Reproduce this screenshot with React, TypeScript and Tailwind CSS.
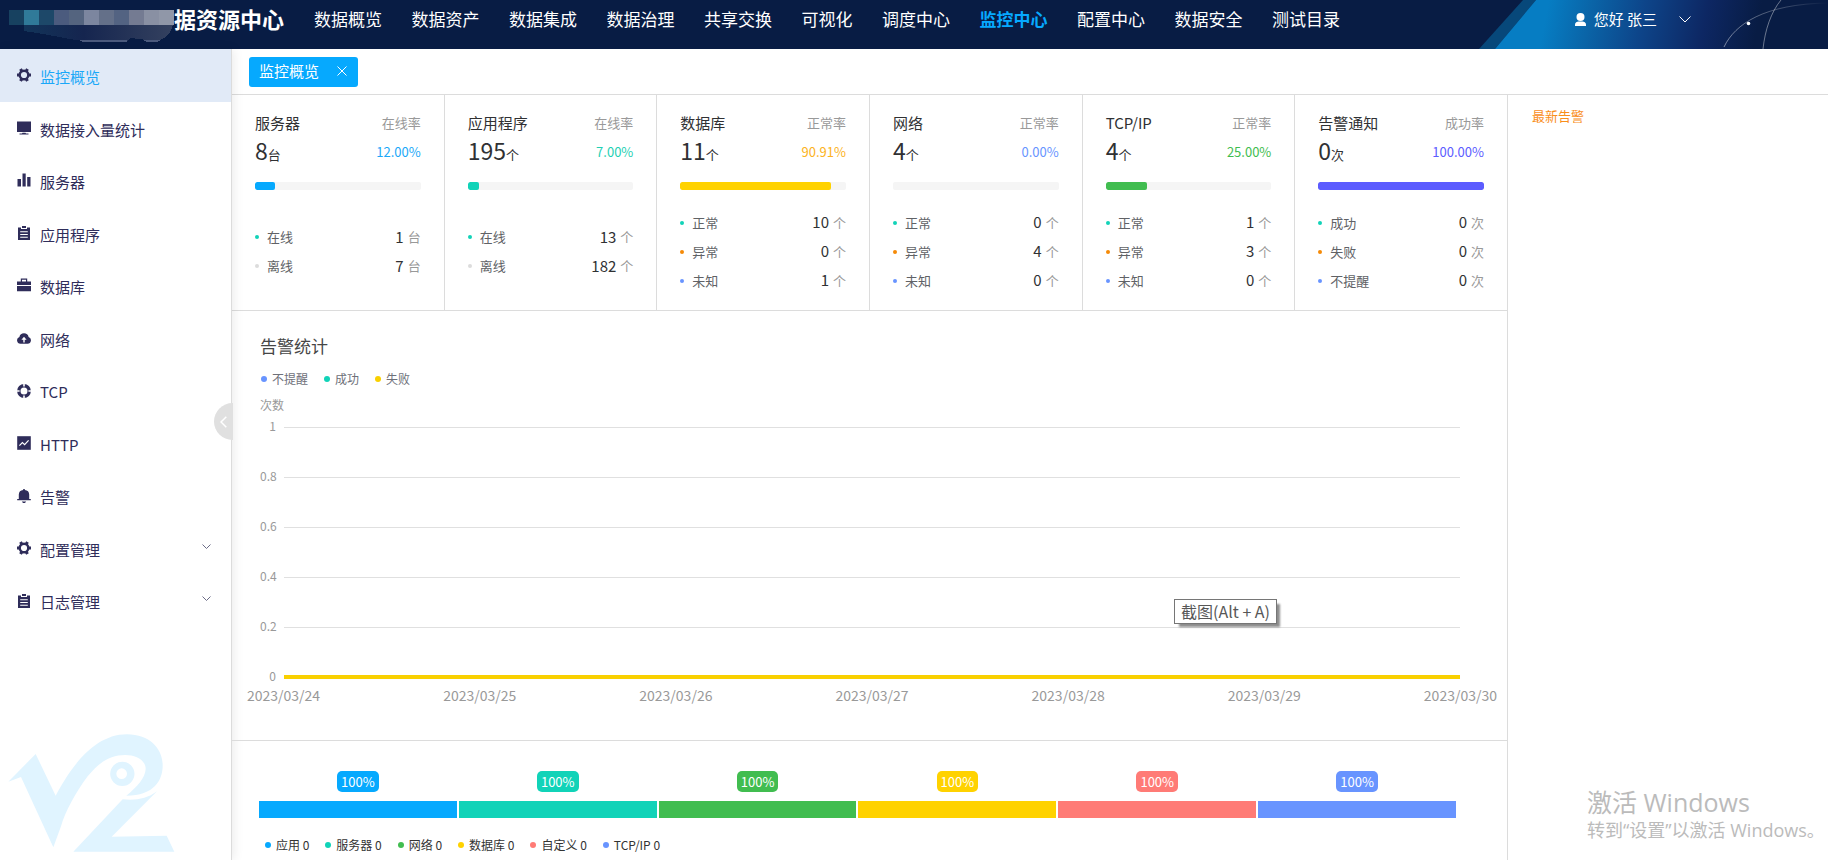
import type { ReactNode } from "react";

const topNav = [
  "数据概览",
  "数据资产",
  "数据集成",
  "数据治理",
  "共享交换",
  "可视化",
  "调度中心",
  "监控中心",
  "配置中心",
  "数据安全",
  "测试目录",
];

function Glyph({ children }: { children: ReactNode }) {
  return (
    <svg viewBox="0 0 14 14" className="size-[14px] shrink-0 -translate-y-0.5" fill="currentColor" aria-hidden="true">
      {children}
    </svg>
  );
}

const gear = (
  <Glyph>
    <circle cx="7" cy="7" r="4.300" fill="none" stroke="currentColor" strokeWidth="2.400" />
    <path d="M0 5.500 H2.800 V8.500 H0 Z M11.200 5.500 H14 V8.500 H11.200 Z" />
    <path d="M0 5.500 H2.800 V8.500 H0 Z M11.200 5.500 H14 V8.500 H11.200 Z" transform="rotate(60 7 7)" />
    <path d="M0 5.500 H2.800 V8.500 H0 Z M11.200 5.500 H14 V8.500 H11.200 Z" transform="rotate(120 7 7)" />
  </Glyph>
);

const clipboard = (
  <Glyph>
    <path fillRule="evenodd" d="M1 1.4 H4 V3 H10 V1.4 H13 V14 H1 Z M3.2 5.2 V6.2 H10.8 V5.2 Z M3.2 8 V9 H10.8 V8 Z M3.2 10.8 V11.8 H10.8 V10.8 Z" />
    <path d="M5 0 H9 V2 H5 Z" />
  </Glyph>
);

const sideNav = [
  { label: "监控概览", icon: gear, active: true },
  {
    label: "数据接入量统计",
    icon: (
      <Glyph>
        <path d="M0 0.5 H14 V11 H0 Z M5.5 11.8 H8.5 L9 12.6 H11.5 V13.5 H2.5 V12.6 H5 Z" />
      </Glyph>
    ),
  },
  {
    label: "服务器",
    icon: (
      <Glyph>
        <path d="M0.5 6 H4 V13.5 H0.5 Z M5.5 0.5 H8.7 V13.5 H5.5 Z M10.2 4 H13.5 V13.5 H10.2 Z" />
      </Glyph>
    ),
  },
  { label: "应用程序", icon: clipboard },
  {
    label: "数据库",
    icon: (
      <Glyph>
        <path d="M0 3.5 H3.8 V0.5 H10.2 V3.5 H14 V7 H0 Z M5 1.7 V3.5 H9 V1.7 Z M0 8 H14 V13.2 H0 Z" fillRule="evenodd" />
      </Glyph>
    ),
  },
  {
    label: "网络",
    icon: (
      <Glyph>
        <path
          fillRule="evenodd"
          d="M3.4 12.8 A3.5 3.5 0 0 1 2.4 6 A4.7 4.7 0 0 1 11.6 6 A3.5 3.5 0 0 1 10.6 12.8 Z M7 5.8 L4.4 8.8 H6.3 V11.6 H7.7 V8.8 H9.6 Z"
        />
      </Glyph>
    ),
  },
  {
    label: "TCP",
    icon: (
      <Glyph>
        <circle cx="7" cy="7" r="5.200" fill="none" stroke="currentColor" strokeWidth="3.400" />
        <path d="M6.2 0 H7.8 V2.6 H6.2 Z M6.2 11.4 H7.8 V14 H6.2 Z M0 6.2 H2.6 V7.8 H0 Z M11.4 6.2 H14 V7.8 H11.4 Z" fill="#fff" />
      </Glyph>
    ),
  },
  {
    label: "HTTP",
    icon: (
      <Glyph>
        <path d="M0.2 0.2 H13.8 V13.8 H0.2 Z" />
        <path d="M2.4 9.6 L5.4 6.6 L7.6 8.6 L11.6 4.4" fill="none" stroke="#fff" strokeWidth="1.2" />
      </Glyph>
    ),
  },
  {
    label: "告警",
    icon: (
      <Glyph>
        <path d="M6.2 0 H7.8 V1 A4.8 4.8 0 0 1 12.2 5.6 V10 H13.8 V11.2 H0.2 V10 H1.8 V5.6 A4.8 4.8 0 0 1 6.2 1 Z M4.8 12.4 H9.2 L8 14 H6 Z" />
      </Glyph>
    ),
  },
  { label: "配置管理", icon: gear, expandable: true },
  { label: "日志管理", icon: clipboard, expandable: true },
];

const teal = "bg-[#11d3b8]";
const orange = "bg-[#f58a07]";
const blue = "bg-[#6894ff]";
const gray = "bg-[#dcdcdc]";

const cards = [
  {
    title: "服务器", total: "8", unit: "台", rateName: "在线率", rate: "12.00%", percent: 12,
    text: "text-[#1ba8f8]", bar: "bg-[#06a9fe]",
    rows: [["在线", "1", teal], ["离线", "7", gray]],
  },
  {
    title: "应用程序", total: "195", unit: "个", rateName: "在线率", rate: "7.00%", percent: 7,
    text: "text-[#1fd0b4]", bar: "bg-[#11d3b8]",
    rows: [["在线", "13", teal], ["离线", "182", gray]],
  },
  {
    title: "数据库", total: "11", unit: "个", rateName: "正常率", rate: "90.91%", percent: 90.91,
    text: "text-[#fcb322]", bar: "bg-[#ffd200]",
    rows: [["正常", "10", teal], ["异常", "0", orange], ["未知", "1", blue]],
  },
  {
    title: "网络", total: "4", unit: "个", rateName: "正常率", rate: "0.00%", percent: 0,
    text: "text-[#6894ff]", bar: "bg-[#6894ff]",
    rows: [["正常", "0", teal], ["异常", "4", orange], ["未知", "0", blue]],
  },
  {
    title: "TCP/IP", total: "4", unit: "个", rateName: "正常率", rate: "25.00%", percent: 25,
    text: "text-[#41bd50]", bar: "bg-[#41bd50]",
    rows: [["正常", "1", teal], ["异常", "3", orange], ["未知", "0", blue]],
  },
  {
    title: "告警通知", total: "0", unit: "次", rateName: "成功率", rate: "100.00%", percent: 100,
    text: "text-[#5c5cff]", bar: "bg-[#5c5cff]",
    rows: [["成功", "0", teal], ["失败", "0", orange], ["不提醒", "0", blue]],
  },
];

const alarmLegend = [
  ["不提醒", blue],
  ["成功", teal],
  ["失败", "bg-[#f9d000]"],
];

const ticks = ["1", "0.8", "0.6", "0.4", "0.2", "0"];

const days = ["2023/03/24", "2023/03/25", "2023/03/26", "2023/03/27", "2023/03/28", "2023/03/29", "2023/03/30"];

const segments = [
  ["应用 0", "bg-[#06a9fe]"],
  ["服务器 0", "bg-[#11d3b8]"],
  ["网络 0", "bg-[#41bd50]"],
  ["数据库 0", "bg-[#ffd200]"],
  ["自定义 0", "bg-[#ff7b76]"],
  ["TCP/IP 0", "bg-[#6894ff]"],
];

function HeaderArt() {
  return (
    <svg viewBox="0 0 349 49" className="absolute right-0 top-0 h-full w-[349px]" aria-hidden="true">
      <defs>
        <linearGradient id="beam" gradientUnits="userSpaceOnUse" x1="70" y1="0" x2="276" y2="40">
          <stop offset="0" stopColor="#067dc3" />
          <stop offset="0.2" stopColor="#0a65a8" />
          <stop offset="0.45" stopColor="#0d458a" />
          <stop offset="0.75" stopColor="#0d2763" />
          <stop offset="1" stopColor="#081c44" />
        </linearGradient>
        <linearGradient id="fade" x1="0" x2="1">
          <stop offset="0" stopColor="#fff" stopOpacity="0.45" />
          <stop offset="0.6" stopColor="#fff" stopOpacity="0.2" />
          <stop offset="1" stopColor="#fff" stopOpacity="0" />
        </linearGradient>
      </defs>
      <path d="M44 0 H57 L16 49 H0 Z" fill="#07487a" />
      <path d="M57 0 H349 V49 H16 Z" fill="url(#beam)" />
      <path d="M245 47 C256 24 285 4 349 3" fill="none" stroke="url(#fade)" />
      <path d="M284 49 C286 30 292 12 302 0" fill="none" stroke="#fff" strokeOpacity="0.4" />
      <circle cx="269.500" cy="23.500" r="1.800" fill="#fff" />
    </svg>
  );
}

function BrandArt() {
  const cells = ["#174160", "#307a99", "#1d4869", "#4b5b7e", "#54647f", "#7c869f", "#647089", "#536382", "#747b92", "#8990a3", "#9097a8"];
  return (
    <svg viewBox="0 0 170 42" className="h-[42px] w-[170px]" shapeRendering="crispEdges" aria-hidden="true">
      <defs>
        <linearGradient id="brand" x1="0" x2="1">
          <stop offset="0" stopColor="#123459" />
          <stop offset="0.4" stopColor="#15254f" />
          <stop offset="1" stopColor="#34415f" />
        </linearGradient>
      </defs>
      <path d="M15 25 H164 C162 34 156 40 146 41 L122 38 L118 41 H74 C58 39 38 34 15 31 Z" fill="url(#brand)" />
      <path d="M70 40 H118 V42 H74 Z M134 40 H152 L148 42 H138 Z" fill="#4c5b7e" />
      {cells.map((fill, i) => (
        <rect key={fill} x={i * 15} y="10" width="15" height="15" fill={fill} />
      ))}
    </svg>
  );
}

function Header() {
  return (
    <header className="relative flex h-[49px] items-start bg-[#081c44] text-white">
      <HeaderArt />
      <div className="flex w-[314px] shrink-0 pl-[9px]">
        <BrandArt />
        <h1 className="-ml-[5px] whitespace-nowrap text-[22px] leading-9 font-bold">据资源中心</h1>
      </div>
      <nav className="flex w-[1026px] justify-between text-[17px] leading-[38px]">
        {topNav.map((item) => (
          <a key={item} href="#" className={item === "监控中心" ? "whitespace-nowrap font-bold text-[#06a9ff]" : "whitespace-nowrap"}>
            {item}
          </a>
        ))}
      </nav>
      <button className="relative mr-[137px] ml-auto flex h-[38px] items-center whitespace-nowrap text-[15px]">
        <svg viewBox="0 0 11 13" className="mr-2 h-[13px] w-[11px]" fill="#fff" aria-hidden="true">
          <circle cx="5.500" cy="4" r="4" />
          <path d="M0 13 V11.500 C0 9.500 2 8.800 3.500 8.500 H7.500 C9 8.800 11 9.500 11 11.500 V13 Z" />
        </svg>
        您好 张三
        <svg viewBox="0 0 12 7" className="ml-[22px] h-[7px] w-3" fill="none" stroke="#fff" aria-hidden="true">
          <path d="M0.500 0.500 L6 6 L11.500 0.500" />
        </svg>
      </button>
    </header>
  );
}

function Sidebar() {
  return (
    <aside className="relative flex w-[232px] shrink-0 flex-col border-r border-[#dcdcdc] shadow-[2px_0_10px_rgba(0,0,0,0.08)]">
      <nav className="flex h-[578px] flex-col text-[15px] text-[#2f2d5a]">
        {sideNav.map((item) => (
          <a
            key={item.label}
            href="#"
            className={item.active ? "flex flex-1 items-center bg-[#e1eaf7] pt-1 pl-[17px]" : "flex flex-1 items-center pt-1 pl-[17px]"}
          >
            {item.icon}
            <span className={item.active ? "ml-[9px] text-[#1ba8f8]" : "ml-[9px]"}>{item.label}</span>
            {item.expandable && (
              <svg viewBox="0 0 9 5" className="mr-5 ml-auto h-[5px] w-[9px] -translate-y-1" fill="none" stroke="#6b6b86" aria-hidden="true">
                <path d="M0.500 0.500 L4.500 4.500 L8.500 0.500" />
              </svg>
            )}
          </a>
        ))}
      </nav>
      <svg viewBox="20 100 504 360" className="mt-auto mb-[7px] ml-[7px] h-[120px] w-[168px]" fill="#e0f4ff" aria-hidden="true">
        <path d="M24 246 L106 163 L166 288 C205 215 275 104 380 104 C450 104 488 150 487 198 C487 240 462 288 378 288 C410 262 435 235 436 208 C436 180 405 166 375 166 C330 166 300 185 262 230 C225 280 195 335 182 380 L159 443 L62 232 Z" />
        <path fillRule="evenodd" d="M366 186 A36.500 36.500 0 1 0 366 259 A36.500 36.500 0 1 0 366 186 Z M364 206 A16 16 0 1 1 364 238 A16 16 0 1 1 364 206 Z" />
        <path d="M367 299 C405 303 440 298 470 275 L334 411 L499 408 L522 456 H219 Z" />
      </svg>
      <button
        aria-label="收起菜单"
        className="absolute top-[354px] -right-0.5 flex h-[37px] w-[19px] items-center justify-center rounded-l-full bg-[#e0e0e0]"
      >
        <svg viewBox="0 0 7 12" className="h-3 w-[7px]" fill="none" stroke="#fff" strokeWidth="1.500" aria-hidden="true">
          <path d="M6.300 0.700 L1 6 L6.300 11.300" />
        </svg>
      </button>
    </aside>
  );
}

function StatCard({ card }: { card: (typeof cards)[number] }) {
  return (
    <section className="border-r border-[#dcdcdc] px-[23px] pt-4 pb-[15px] text-[#303133]">
      <div className="flex h-6 items-center justify-between">
        <h2 className="text-[15px]">{card.title}</h2>
        <span className="text-[13px] text-[#999]">{card.rateName}</span>
      </div>
      <div className="flex h-[34px] items-center justify-between">
        <p className="text-[13px] leading-[34px]">
          <span className="text-[23px]">{card.total}</span>
          {card.unit}
        </p>
        <span className={`text-[13px] ${card.text}`}>{card.rate}</span>
      </div>
      <div className="mt-[13px] h-2 overflow-hidden rounded-[2px] bg-[#f5f5f5]">
        <div className={`h-full rounded-[2px] ${card.bar}`} style={{ width: `${card.percent}%` }} />
      </div>
      <ul className="mt-[18px] flex h-[87px] flex-col justify-center">
        {card.rows.map(([label, value, dot]) => (
          <li key={label} className="flex h-[29px] items-center text-[13px]">
            <span className={`size-1 rounded-full ${dot}`} />
            <span className="ml-2 text-[#606266]">{label}</span>
            <span className="ml-auto text-[15px]">{value}</span>
            <span className="ml-1 text-[#999]">{card.unit}</span>
          </li>
        ))}
      </ul>
    </section>
  );
}

function Legend({ items }: { items: string[][] }) {
  return (
    <ul className="flex gap-4 text-[12px] leading-4">
      {items.map(([label, dot]) => (
        <li key={label} className="flex items-center gap-[5px]">
          <span className={`size-1.5 rounded-full ${dot}`} />
          {label}
        </li>
      ))}
    </ul>
  );
}

function AlarmChart() {
  return (
    <section className="relative border-b border-[#dcdcdc] pt-[23px] pb-[35px] text-[#999]">
      <h2 className="pl-7 text-[17px] leading-6 text-[#464646]">告警统计</h2>
      <div className="mt-[13px] pl-[29px] text-[#6e7079]">
        <Legend items={alarmLegend} />
      </div>
      <p className="mt-[10px] pl-7 text-[12px] leading-4">次数</p>
      <div className="mt-2 mr-[47px] ml-7 flex h-[262px] flex-col justify-between">
        {ticks.map((tick) => (
          <div key={tick} className="flex h-3 items-center gap-2">
            <span className="w-4 pb-0.5 text-right text-[12px] leading-3">{tick}</span>
            <span className={tick === "0" ? "h-1 flex-1 bg-[#f9d000]" : "h-px flex-1 bg-[#e0e0e0]"} />
          </div>
        ))}
      </div>
      <div className="mt-0.5 mr-[10px] ml-[15px] flex justify-between text-[14px] leading-5">
        {days.map((day) => (
          <span key={day}>{day}</span>
        ))}
      </div>
      <div
        role="tooltip"
        className="absolute right-[230px] bottom-[116px] border border-[#767676] bg-white px-1.5 text-[16px] leading-[23px] text-[#575757] shadow-[4px_4px_2px_-1px_rgba(0,0,0,0.45)]"
      >
        截图(Alt + A)
      </div>
    </section>
  );
}

function ShareBar() {
  return (
    <section className="pt-[30px] pr-[51px] pl-[27px]">
      <div className="grid grid-cols-6 gap-0.5">
        {segments.map(([label, color]) => (
          <div key={label} className="flex flex-col items-center">
            <span className={`rounded-[5px] px-1 text-[13px] leading-[21px] text-white ${color}`}>100%</span>
            <span className={`mt-[9px] h-[17px] w-full ${color}`} />
          </div>
        ))}
      </div>
      <div className="mt-[19px] pl-1.5 text-[#333]">
        <Legend items={segments} />
      </div>
    </section>
  );
}

export default function App() {
  return (
    <div className="flex min-h-screen flex-col bg-white font-['Noto_Sans_CJK_SC',sans-serif]">
      <Header />
      <div className="flex flex-1">
        <Sidebar />
        <main className="flex min-w-0 flex-1 flex-col">
          <div className="h-[46px] border-b border-[#dcdcdc] pt-2 pl-[17px]">
            <div className="flex h-[30px] w-[109px] items-center justify-between rounded-[3px] bg-[#06a9fe] pr-[11px] pb-0.5 pl-[10px] text-[15px] leading-7 text-white">
              <span>监控概览</span>
              <button aria-label="关闭">
                <svg viewBox="0 0 10 10" className="size-[10px]" stroke="#fff" aria-hidden="true">
                  <path d="M0.500 0.500 L9.500 9.500 M9.500 0.500 L0.500 9.500" />
                </svg>
              </button>
            </div>
          </div>
          <div className="flex flex-1">
            <div className="flex min-w-0 flex-1 flex-col">
              <div className="grid grid-cols-6 border-b border-[#dcdcdc]">
                {cards.map((card) => (
                  <StatCard key={card.title} card={card} />
                ))}
              </div>
              <div className="flex-1 border-r border-[#dcdcdc]">
                <AlarmChart />
                <ShareBar />
              </div>
            </div>
            <aside className="flex w-80 shrink-0 flex-col pt-[11px] pl-6">
              <h2 className="text-[13px] leading-5 text-[#f98e1b]">最新告警</h2>
              <div className="mt-auto mb-[18px] ml-[55px] whitespace-nowrap font-['Open_Sans','Noto_Sans_CJK_SC',sans-serif] text-[#bbb]">
                <p className="text-[25px] leading-8">激活 Windows</p>
                <p className="text-[18px] leading-6">转到“设置”以激活 Windows。</p>
              </div>
            </aside>
          </div>
        </main>
      </div>
    </div>
  );
}
